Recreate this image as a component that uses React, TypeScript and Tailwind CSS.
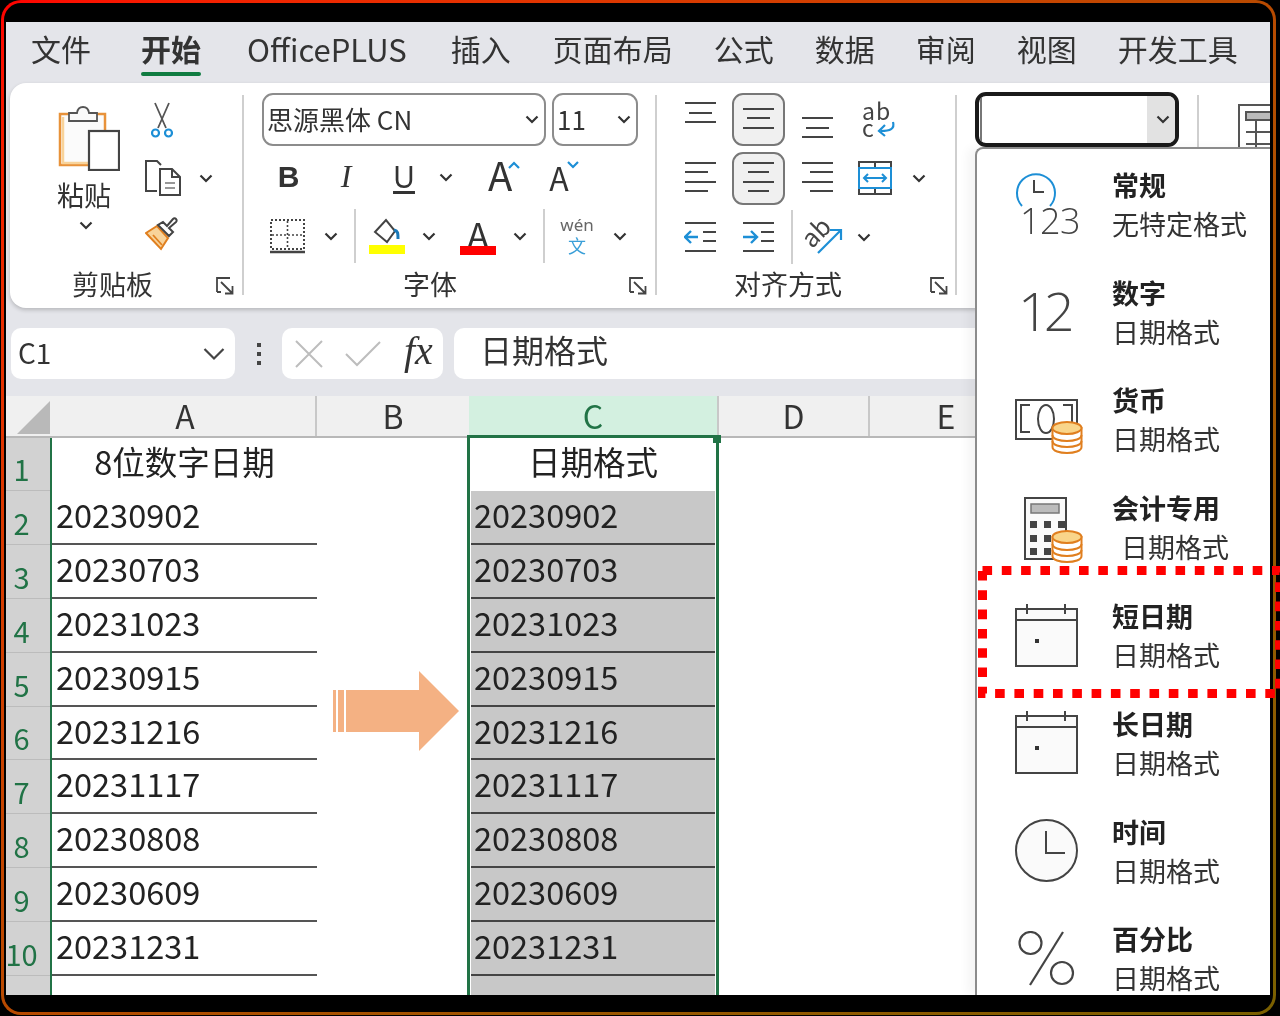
import React from "react";

const tabs = [
  { label: "文件", cls: "mr-[9px] text-[30px]" },
  { label: "开始", cls: "mr-[5px] text-[30px] font-bold", active: true },
  { label: "OfficePLUS", cls: "mr-[3px] text-[31px]" },
  { label: "插入", cls: "mr-[1px] text-[30px]" },
  { label: "页面布局", cls: "text-[30px]" },
  { label: "公式", cls: "text-[30px]" },
  { label: "数据", cls: "text-[30px]" },
  { label: "审阅", cls: "text-[30px]" },
  { label: "视图", cls: "text-[30px]" },
  { label: "开发工具", cls: "text-[30px]" },
];

const dates = [
  "20230902",
  "20230703",
  "20231023",
  "20230915",
  "20231216",
  "20231117",
  "20230808",
  "20230609",
  "20231231",
];

function Chev({ className = "" }: { className?: string }) {
  return (
    <svg width="14" height="9" viewBox="0 0 14 9" className={className}>
      <path d="M1.5 1.5 7 7l5.5-5.5" fill="none" stroke="#333" strokeWidth="2.2" />
    </svg>
  );
}

function Launcher() {
  return (
    <svg width="18" height="18" viewBox="0 0 18 18" fill="none" stroke="#444" strokeWidth="1.8">
      <path d="M1 15V1h13" />
      <path d="M5 5l11 11M9 16.5h7.500V9" />
      <path d="M1 15h4" />
    </svg>
  );
}

function Sep({ className = "" }: { className?: string }) {
  return <div className={`w-[2px] bg-[#cfcfcf] ${className}`} />;
}

function LinedIcon({ rows, blue }: { rows: [number, number, number][]; blue?: string }) {
  return (
    <svg width="33" height="32" viewBox="0 0 33 32" fill="none" stroke="#444" strokeWidth="2">
      {rows.map(([y, a, b], i) => (
        <path key={i} d={`M${a} ${y}H${b}`} />
      ))}
      {blue && <path d={blue} stroke="#1d8fd6" strokeWidth="2.4" />}
    </svg>
  );
}

function PasteIcon() {
  return (
    <svg width="62" height="68" viewBox="0 0 62 68" fill="none">
      <rect x="2" y="11" width="45" height="51" fill="#fbfbfb" stroke="#e8923a" strokeWidth="2.5" />
      <path d="M5 14v46h38" stroke="#f8d39a" strokeWidth="2.5" />
      <path d="M11 18V10h8c1-8 11-8 12 0h8v8z" fill="#fafafa" stroke="#555" strokeWidth="1.8" />
      <rect x="31" y="28" width="30" height="39" fill="#fff" stroke="#444" strokeWidth="2.2" />
    </svg>
  );
}

function ScissorsIcon() {
  return (
    <svg width="24" height="37" viewBox="0 0 24 37" fill="none">
      <path d="M5 1l11 25M19 1L8 26" stroke="#555" strokeWidth="1.8" />
      <circle cx="5.5" cy="31" r="3.5" stroke="#1d8fd6" strokeWidth="2.2" />
      <circle cx="18.5" cy="31" r="3.5" stroke="#1d8fd6" strokeWidth="2.2" />
    </svg>
  );
}

function CopyIcon() {
  return (
    <svg width="36" height="36" viewBox="0 0 36 36" fill="none" stroke="#444" strokeWidth="2">
      <path d="M12 31H1V1h11l4 4" />
      <path d="M15 9h12l8 8v18H15z" fill="#fff" />
      <path d="M27 9v8h8" />
      <path d="M20 23h10M20 28h10" stroke="#777" strokeWidth="1.6" />
    </svg>
  );
}

function BrushIcon() {
  return (
    <svg width="36" height="34" viewBox="0 0 36 34" fill="none">
      <path d="M1 16l11-7 11 12-7 11z" fill="#f8d39a" stroke="#e07f1f" strokeWidth="2" />
      <path d="M8 18l9 10" stroke="#e07f1f" strokeWidth="1.8" />
      <path d="M13 8l11 11 4-4-4-4 7-6c2-2-1-5-3-3l-6 7-4-4z" fill="#fff" stroke="#444" strokeWidth="2" />
    </svg>
  );
}

function BorderIcon() {
  return (
    <svg width="35" height="35" viewBox="0 0 35 35" fill="none" stroke="#444">
      <rect x="1" y="1" width="33" height="29" strokeWidth="2" strokeDasharray="2 2" />
      <path d="M17.5 2v27M2 16h31" strokeWidth="1.6" strokeDasharray="2 2" />
      <path d="M0 33h35" strokeWidth="2.4" />
    </svg>
  );
}

function FillIcon() {
  return (
    <svg width="37" height="38" viewBox="0 0 37 38">
      <path d="M6 15L17 3l9 11-8 11z" fill="#fff" stroke="#444" strokeWidth="2" />
      <path d="M29 22c0-6 0-8-4-9" fill="none" stroke="#1878b8" strokeWidth="3" />
      <rect x="0" y="28" width="36" height="9" fill="#ffff00" />
    </svg>
  );
}

function WrapIcon() {
  return (
    <div className="relative h-[42px] w-[34px] text-[23px] leading-[17px] text-[#444]">
      <div className="tracking-[1px]">ab</div>
      <div>c</div>
      <svg width="20" height="16" viewBox="0 0 20 16" fill="none" className="absolute left-[14px] top-[19px]">
        <path d="M17 1c2 7-3 9-12 9M9 4l-6 6 6 5" stroke="#1d8fd6" strokeWidth="2.2" />
      </svg>
    </div>
  );
}

function MergeIcon() {
  return (
    <svg width="34" height="34" viewBox="0 0 34 34" fill="none">
      <rect x="1" y="1" width="32" height="32" stroke="#444" strokeWidth="2" />
      <path d="M17 1v6M17 27v6" stroke="#444" strokeWidth="2" />
      <rect x="1" y="7" width="32" height="20" stroke="#1d8fd6" strokeWidth="2" fill="#fff" />
      <path d="M6 17h22M10 13l-4 4 4 4M24 13l4 4-4 4" stroke="#1d8fd6" strokeWidth="2" />
    </svg>
  );
}

function OrientIcon() {
  return (
    <div className="relative h-[36px] w-[38px]">
      <span className="absolute left-[-6px] top-[-3px] rotate-[-45deg] text-[25px] leading-[30px] text-[#444]">
        ab
      </span>
      <svg width="38" height="36" viewBox="0 0 38 36" fill="none" className="absolute left-0 top-0">
        <path d="M12 34L35 11M24 11h11v10" stroke="#1d8fd6" strokeWidth="2.2" />
      </svg>
    </div>
  );
}

function ClockSmall() {
  return (
    <svg width="42" height="38" viewBox="0 0 42 38" fill="none" className="absolute left-0 top-0">
      <path d="M7 35a19 19 0 1 1 28 0" stroke="#1d8fd6" strokeWidth="2" />
      <path d="M19 9v12h10" stroke="#444" strokeWidth="2" />
    </svg>
  );
}

function Coins({ className = "" }: { className?: string }) {
  return (
    <svg width="32" height="34" viewBox="0 0 32 34" className={className}>
      <path d="M1.5 7v19c0 8 29 8 29 0V7z" fill="#fff" stroke="#e07f1f" strokeWidth="2" />
      <path d="M1.5 14c0 8 29 8 29 0M1.5 20c0 8 29 8 29 0" fill="none" stroke="#e07f1f" strokeWidth="2" />
      <ellipse cx="16" cy="7" rx="14.5" ry="6" fill="#f9d58a" stroke="#e07f1f" strokeWidth="2" />
    </svg>
  );
}

function CurrencyIcon() {
  return (
    <div className="relative mt-[17px] h-[57px] w-[68px]">
      <svg width="63" height="41" viewBox="0 0 63 41" fill="none" stroke="#444" className="absolute left-0 top-0">
        <rect x="1" y="1" width="61" height="39" strokeWidth="2" />
        <path d="M15 6H6v27h9M48 6h9v27h-9" strokeWidth="2" />
        <ellipse cx="31" cy="20" rx="8" ry="14" strokeWidth="2" />
      </svg>
      <Coins className="absolute left-[36px] top-[22px]" />
    </div>
  );
}

function CalcIcon() {
  const keys = [
    [7, 24], [21, 24], [35, 24],
    [7, 38], [21, 38],
    [7, 51], [21, 51],
  ];
  return (
    <div className="relative ml-[9px] mt-[6px] h-[67px] w-[59px]">
      <svg width="43" height="63" viewBox="0 0 43 63" className="absolute left-0 top-0">
        <rect x="1" y="1" width="41" height="61" fill="#fafafa" stroke="#444" strokeWidth="2" />
        <rect x="7" y="7" width="28" height="9" fill="#bbb" stroke="#777" strokeWidth="1.5" />
        {keys.map(([x, y], i) => (
          <rect key={i} x={x - 1} y={y} width="7" height="7" fill="#444" />
        ))}
      </svg>
      <Coins className="absolute left-[27px] top-[33px]" />
    </div>
  );
}

function CalendarIcon() {
  return (
    <svg width="63" height="63" viewBox="0 0 63 63" fill="none" stroke="#444" strokeWidth="2">
      <rect x="1" y="5" width="61" height="57" fill="#fafafa" />
      <path d="M1 16h61M12 0v10M50 0v10" />
      <rect x="20" y="35" width="4" height="4" fill="#333" stroke="none" />
    </svg>
  );
}

function ClockIcon() {
  return (
    <svg width="63" height="63" viewBox="0 0 63 63" fill="none" stroke="#444" strokeWidth="2">
      <circle cx="31.5" cy="31.5" r="30.5" fill="#fafafa" />
      <path d="M31 12v22h19" />
    </svg>
  );
}

function PercentIcon() {
  return (
    <svg width="60" height="56" viewBox="0 0 60 56" fill="none" stroke="#444" strokeWidth="2.2" className="ml-[3px] mt-[2px]">
      <circle cx="12.5" cy="12" r="11" />
      <path d="M45 1L12 54" />
      <circle cx="44" cy="42" r="11" />
    </svg>
  );
}

const formats = [
  {
    title: "常规",
    sub: "无特定格式",
    icon: (
      <div className="relative h-[66px] w-[63px]">
        <ClockSmall />
        <span className="absolute left-[5px] top-[27px] font-['Open_Sans',sans-serif] text-[36px] font-light leading-[46px] tracking-[-0.5px] text-[#444]">
          123
        </span>
      </div>
    ),
  },
  {
    title: "数字",
    sub: "日期格式",
    icon: (
      <span className="-mt-[3px] block pl-[3px] font-['Open_Sans',sans-serif] text-[54px] font-light leading-[62px] tracking-[-5px] text-[#444]">
        12
      </span>
    ),
  },
  { title: "货币", sub: "日期格式", icon: <CurrencyIcon /> },
  { title: "会计专用", sub: "日期格式", subCls: "ml-[9px]", icon: <CalcIcon /> },
  { title: "短日期", sub: "日期格式", icon: <CalendarIcon /> },
  { title: "长日期", sub: "日期格式", icon: <CalendarIcon /> },
  { title: "时间", sub: "日期格式", icon: <ClockIcon /> },
  { title: "百分比", sub: "日期格式", icon: <PercentIcon /> },
];

function FormatMenu() {
  return (
    <div className="absolute bottom-0 left-[969px] right-0 top-[125px] overflow-hidden rounded-tl-[8px] border-l-2 border-t-2 border-[#8c8c8c] bg-white pt-[1px] shadow-[-8px_0_10px_rgba(0,0,0,0.04)]">
      {formats.map((f) => (
        <div key={f.title} className="flex h-[107.8px] items-center pl-[38px]">
          <div className="flex w-[97px] shrink-0 items-center">{f.icon}</div>
          <div className="text-[27px] leading-[39px] text-[#333]">
            <div className="font-bold text-[#222]">{f.title}</div>
            <div className={f.subCls ?? ""}>{f.sub}</div>
          </div>
        </div>
      ))}
    </div>
  );
}

function Ribbon() {
  return (
    <div className="ml-[4px] flex h-[225px] shrink-0 overflow-hidden rounded-l-[16px] bg-white shadow-[0_2px_4px_rgba(0,0,0,0.2)]">
      {/* 剪贴板 */}
      <div className="flex w-[232px] shrink-0 flex-col">
        <div className="flex h-[186px] pl-[48px]">
          <div className="flex w-[76px] flex-col pt-[20px]">
            <PasteIcon />
            <div className="-ml-[1px] mt-[4px] text-[27px] leading-[40px] text-[#333]">粘贴</div>
            <Chev className="ml-[21px] mt-[6px]" />
          </div>
          <div className="flex flex-col pt-[19px]">
            <div className="ml-[16px]">
              <ScissorsIcon />
            </div>
            <div className="ml-[11px] mt-[21px] flex items-center gap-[18px]">
              <CopyIcon />
              <Chev />
            </div>
            <div className="ml-[11px] mt-[21px]">
              <BrushIcon />
            </div>
          </div>
        </div>
        <div className="relative text-[27px] leading-[30px] text-[#333]">
          <span className="block pl-[62px]">剪贴板</span>
          <span className="absolute left-[206px] top-[8px]">
            <Launcher />
          </span>
        </div>
      </div>
      <Sep className="mt-[12px] h-[200px] shrink-0" />

      {/* 字体 */}
      <div className="flex w-[411px] shrink-0 flex-col pl-[18px]">
        <div className="flex h-[186px] flex-col pt-[10px]">
          <div className="flex gap-[6px]">
            <div className="flex h-[53px] w-[284px] items-center justify-between rounded-[11px] border-2 border-[#8c8c8c] pl-[3px] pr-[5px] text-[26px] text-[#333]">
              <span className="-mt-[3px]">思源黑体 CN</span>
              <Chev />
            </div>
            <div className="flex h-[53px] w-[86px] items-center justify-between rounded-[11px] border-2 border-[#8c8c8c] pl-[3px] pr-[5px] text-[26px] text-[#333]">
              <span className="-mt-[3px]">11</span>
              <Chev />
            </div>
          </div>
          <div className="mt-[5px] flex h-[52px] items-center">
            <span className="-mt-[2px] w-[50px] pl-[3px] text-center font-['Liberation_Sans',sans-serif] text-[30px] font-bold text-[#333]">B</span>
            <span className="-mt-[2px] ml-[4px] w-[60px] text-center font-['Liberation_Serif',serif] text-[32px] italic text-[#333]">I</span>
            <span className="w-[56px] text-center font-['Noto_Sans',sans-serif] text-[30px] leading-[34px] text-[#333] underline underline-offset-[3px]">U</span>
            <div className="w-[32px] pl-[7px]">
              <Chev />
            </div>
            <div className="relative -mt-[6px] ml-[24px] flex items-start">
              <span className="text-[40px] leading-[50px] text-[#333]">A</span>
              <svg width="12" height="8" viewBox="0 0 12 8" className="-ml-[4px] mt-[12px]" fill="none">
                <path d="M1 7l5-5 5 5" stroke="#1d8fd6" strokeWidth="2.2" />
              </svg>
            </div>
            <div className="ml-[29px] flex items-start">
              <span className="text-[32px] leading-[44px] text-[#333]">A</span>
              <svg width="12" height="8" viewBox="0 0 12 8" className="-ml-[2px] mt-[6px]" fill="none">
                <path d="M1 1l5 5 5-5" stroke="#1d8fd6" strokeWidth="2.2" />
              </svg>
            </div>
          </div>
          <div className="mt-[6px] flex h-[54px] items-center">
            <div className="ml-[8px]">
              <BorderIcon />
            </div>
            <Chev className="ml-[19px]" />
            <Sep className="ml-[16px] h-[54px]" />
            <div className="ml-[13px]">
              <FillIcon />
            </div>
            <Chev className="ml-[16px]" />
            <div className="ml-[24px] flex h-[38px] w-[36px] flex-col items-center">
              <span className="h-[29px] text-[36px] leading-[32px] text-[#333]">A</span>
              <div className="h-[9px] w-[36px] bg-[#ff0000]" />
            </div>
            <Chev className="ml-[17px]" />
            <Sep className="ml-[16px] h-[54px]" />
            <div className="-mt-[2px] ml-[15px] flex w-[34px] flex-col items-center">
              <span className="font-['Noto_Sans',sans-serif] text-[17px] leading-[20px] text-[#666]">wén</span>
              <span className="text-[18px] leading-[20px] text-[#3a9fd8]">文</span>
            </div>
            <Chev className="ml-[19px]" />
          </div>
        </div>
        <div className="relative text-[27px] leading-[30px] text-[#333]">
          <span className="block pl-[141px]">字体</span>
          <span className="absolute left-[367px] top-[8px]">
            <Launcher />
          </span>
        </div>
      </div>
      <Sep className="mt-[12px] h-[200px] shrink-0" />

      {/* 对齐方式 */}
      <div className="flex w-[298px] shrink-0 flex-col pl-[27px]">
        <div className="flex h-[186px] flex-col pt-[10px]">
          <div className="flex h-[53px] items-start">
            <div className="mt-[8px]">
              <LinedIcon rows={[[2, 1, 32], [12, 5, 28], [21, 1, 32]]} />
            </div>
            <div className="ml-[15px] flex h-[53px] w-[53px] items-center justify-center rounded-[11px] border-2 border-[#777] bg-[#f0f0f0]">
              <LinedIcon rows={[[5, 1, 32], [14, 5, 28], [24, 1, 32]]} />
            </div>
            <div className="ml-[16px] mt-[23px]">
              <LinedIcon rows={[[2, 1, 32], [12, 5, 28], [21, 1, 32]]} />
            </div>
            <div className="ml-[28px] mt-[9px]">
              <WrapIcon />
            </div>
          </div>
          <div className="mt-[6px] flex h-[52px] items-center">
            <LinedIcon rows={[[1, 1, 32], [10, 1, 24], [20, 1, 32], [29, 1, 24]]} />
            <div className="ml-[15px] flex h-[53px] w-[53px] items-center justify-center rounded-[11px] border-2 border-[#777] bg-[#f0f0f0]">
              <LinedIcon rows={[[1, 1, 32], [10, 6, 27], [20, 1, 32], [29, 6, 27]]} />
            </div>
            <div className="ml-[16px]">
              <LinedIcon rows={[[1, 1, 32], [10, 9, 32], [20, 1, 32], [29, 9, 32]]} />
            </div>
            <div className="ml-[24px]">
              <MergeIcon />
            </div>
            <Chev className="ml-[20px]" />
          </div>
          <div className="mt-[6px] flex h-[54px] items-center">
            <LinedIcon
              rows={[[2, 1, 32], [11, 19, 32], [20, 19, 32], [30, 1, 32]]}
              blue="M14 16H2M7 10l-6 6 6 6"
            />
            <div className="ml-[25px]">
              <LinedIcon
                rows={[[2, 1, 32], [11, 19, 32], [20, 19, 32], [30, 1, 32]]}
                blue="M1 16h13M9 10l6 6-6 6"
              />
            </div>
            <Sep className="ml-[16px] h-[54px]" />
            <div className="ml-[13px]">
              <OrientIcon />
            </div>
            <Chev className="ml-[13px]" />
          </div>
        </div>
        <div className="relative text-[27px] leading-[30px] text-[#333]">
          <span className="block pl-[50px]">对齐方式</span>
          <span className="absolute left-[246px] top-[8px]">
            <Launcher />
          </span>
        </div>
      </div>
      <Sep className="mt-[12px] h-[200px] shrink-0" />

      {/* 数字格式 */}
      <div className="w-[240px] shrink-0 pl-[18px] pt-[9px]">
        <div className="flex h-[55px] w-[204px] items-stretch overflow-hidden rounded-[11px] border-[4px] border-[#1a1a1a] bg-white">
          <div className="ml-[1px] w-[2px] bg-[#777]" />
          <div className="flex-1" />
          <div className="flex w-[28px] items-center justify-center bg-[#e2e2e2] pl-[3px]">
            <Chev />
          </div>
        </div>
      </div>
      <Sep className="mt-[12px] h-[200px] shrink-0" />
      <div className="pl-[39px] pt-[21px]">
        <svg width="36" height="44" viewBox="0 0 36 44" fill="none" stroke="#555" strokeWidth="2">
          <rect x="1" y="1" width="40" height="60" fill="#fff" />
          <rect x="8" y="8" width="32" height="8" fill="#bbb" />
          <path d="M8 16h30M8 28h30M8 40h30M18 16v30" />
        </svg>
      </div>
    </div>
  );
}

function FormulaBar() {
  return (
    <div className="mt-[20px] flex h-[51px] shrink-0 items-stretch pl-[5px]">
      <div className="flex w-[224px] items-center justify-between rounded-[10px] bg-white pl-[7px] pr-[10px] text-[28px] text-[#333]">
        <span className="-mt-[4px]">C1</span>
        <svg width="22" height="14" viewBox="0 0 22 14" fill="none">
          <path d="M1.5 2 11 11.5 20.5 2" stroke="#444" strokeWidth="2.2" />
        </svg>
      </div>
      <div className="flex w-[47px] flex-col items-center justify-center gap-[5px]">
        <div className="h-[4px] w-[4px] bg-[#444]" />
        <div className="h-[4px] w-[4px] bg-[#444]" />
        <div className="h-[4px] w-[4px] bg-[#444]" />
      </div>
      <div className="flex w-[161px] items-center rounded-[10px] bg-white pl-[13px]">
        <svg width="28" height="28" viewBox="0 0 28 28" fill="none">
          <path d="M1 1l26 26M27 1L1 27" stroke="#bdbdbd" strokeWidth="2" />
        </svg>
        <svg width="36" height="26" viewBox="0 0 36 26" fill="none" className="ml-[22px]">
          <path d="M1 13l11 11L35 1" stroke="#bdbdbd" strokeWidth="2" />
        </svg>
        <span className="-mt-[5px] ml-[23px] font-['Liberation_Serif',serif] text-[40px] italic leading-[40px] text-[#333]">
          fx
        </span>
      </div>
      <div className="ml-[11px] flex flex-1 items-center rounded-l-[10px] bg-white pl-[26px] text-[32px] text-[#333]">
        <span className="-mt-[9px]">日期格式</span>
      </div>
    </div>
  );
}

function Sheet() {
  return (
    <div className="mt-[17px] flex min-h-0 flex-1 flex-col">
      <div className="flex h-[42px] shrink-0 border-b-2 border-[#b8b8b8] bg-[#f0f0f0] text-[32px] leading-[38px] text-[#333]">
        <div className="flex w-[46px] items-end justify-end pb-[2px] pr-[2px]">
          <svg width="33" height="33" viewBox="0 0 33 33">
            <path d="M0 33 33 0v33z" fill="#b9b9b9" />
          </svg>
        </div>
        <div className="w-[265px] border-r-2 border-[#c8c8c8] pl-[3px] text-center">A</div>
        <div className="w-[152px] text-center">B</div>
        <div className="w-[248px] bg-[#d3f0e0] text-center text-[#217346]">C</div>
        <div className="w-[153px] border-x-2 border-[#c8c8c8] text-center">D</div>
        <div className="w-[152px] text-center">E</div>
      </div>
      <div className="relative flex min-h-0 flex-1 bg-white">
        {/* row numbers */}
        <div className="w-[44px] shrink-0 bg-[#d2d2d2] text-[29px] text-[#217346]">
          {Array.from({ length: 11 }, (_, i) => (
            <div
              key={i}
              className={`flex items-end justify-center border-b border-[#bcbcbc] pb-[4px] pr-[13px] leading-[36px] ${i === 0 ? "h-[53px]" : "h-[53.9px]"} ${i === 9 ? "pr-[11px]" : ""}`}
            >
              {i < 10 ? i + 1 : ""}
            </div>
          ))}
        </div>
        <div className="w-[2px] shrink-0 bg-[#217346]" />
        {/* column A */}
        <div className="w-[265px] shrink-0 text-[32.5px] leading-[46px] text-[#222]">
          <div className="h-[53px] text-center">8位数字日期</div>
          {dates.map((d) => (
            <div key={d} className="h-[53.9px] border-b-2 border-[#555] pl-[4px]">
              {d}
            </div>
          ))}
        </div>
        <div className="w-[150px] shrink-0" />
        {/* selected column C */}
        <div className="-mt-[3px] w-[252px] shrink-0 border-x-[3px] border-t-[3px] border-[#217346] text-[32.5px] leading-[46px] text-[#222]">
          <div className="h-[53px] text-center">日期格式</div>
          <div className="ml-[1px] mr-[1px] bg-[#c8c8c8] pb-[60px]">
            {dates.map((d) => (
              <div key={d} className="h-[53.9px] border-b-2 border-[#444] pl-[3px]">
                {d}
              </div>
            ))}
          </div>
        </div>
        <div className="absolute left-[707px] top-[-3px] h-[8px] w-[8px] bg-[#217346]" />
        <svg
          width="128"
          height="80"
          viewBox="0 0 128 80"
          className="absolute left-[326px] top-[233px]"
          fill="#f4b183"
        >
          <path d="M1 19h3v42H1zM6 19h6v42H6zM14 19h73V0l40 40-40 40V61H14z" />
        </svg>
      </div>
    </div>
  );
}

export default function App() {
  return (
    <div className="h-[1016px] w-[1280px] overflow-hidden bg-black font-['Noto_Sans_CJK_SC','Noto_Sans',sans-serif] blur-[0.4px]">
      <div className="relative ml-[1px] h-[1015px] w-[1275px] rounded-[20px] bg-gradient-to-br from-[#ff0000] via-[#b84a00] to-[#7a6000] p-[3px]">
        <div className="h-full w-full rounded-[17px] bg-black pb-[17px] pl-[2px] pr-[3px] pt-[19px]">
          <div className="relative flex h-full w-full flex-col overflow-hidden bg-[#e4e5ea]">
            <div className="flex h-[61px] shrink-0 gap-[41px] pl-[25px] text-[#333]">
              {tabs.map((t) => (
                <div key={t.label} className={`relative h-[54px] pt-[4px] leading-[45px] ${t.cls}`}>
                  {t.label}
                  {t.active && (
                    <div className="absolute bottom-0 left-0 right-0 h-[4px] rounded-full bg-[#107c41]" />
                  )}
                </div>
              ))}
            </div>
            <Ribbon />
            <FormulaBar />
            <Sheet />
            <FormatMenu />
          </div>
        </div>
        {/* red dotted annotation */}
        <svg width="302" height="133" viewBox="0 0 302 133" fill="none" className="absolute left-[977px] top-[566px]">
          <rect x="4.5" y="4.5" width="297" height="123" stroke="#ff0000" strokeWidth="9" strokeDasharray="9.6 9.7" />
        </svg>
      </div>
    </div>
  );
}
